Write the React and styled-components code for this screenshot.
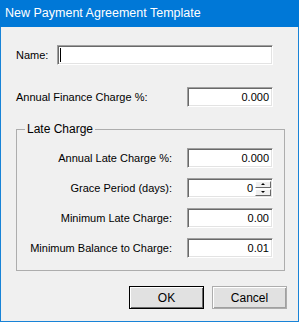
import React from 'react';
import styled, { createGlobalStyle } from 'styled-components';

const GlobalStyle = createGlobalStyle`
  html, body {
    margin: 0;
    padding: 0;
    background: #f0f0f0;
  }
  body {
    font-family: "Liberation Sans", Arial, sans-serif;
    font-size: 11px;
    color: #000;
  }
`;

const Window = styled.div`
  width: 299px;
  height: 322px;
  box-sizing: border-box;
  border: 1px solid #1883d7;
  border-top: none;
  background: #f0f0f0;
  display: flex;
  flex-direction: column;
`;

const TitleBar = styled.div`
  height: 27px;
  margin: 0 -1px;
  background: #0078d7;
  color: #fff;
  font-size: 12.5px;
  display: flex;
  align-items: center;
  padding-left: 5px;
  padding-bottom: 1px;
  box-sizing: border-box;
`;

const Content = styled.div`
  flex: 1;
  display: flex;
  flex-direction: column;
  padding: 18px 11px 0 15px;
`;

const Row = styled.div`
  display: flex;
  align-items: center;
  justify-content: ${(p) => (p.$right ? 'flex-end' : 'space-between')};
  height: 20px;
  padding-right: ${(p) => (p.$inner ? 0 : 14)}px;
  margin-bottom: ${(p) => p.$mb || 0}px;
`;

const Label = styled.span`
  white-space: nowrap;
  margin-right: ${(p) => p.$mr || 0}px;
`;

const TextBox = styled.div`
  position: relative;
  width: ${(p) => p.$w}px;
  height: 20px;
  box-sizing: border-box;
  background: #fff;
  border-style: solid;
  border-width: 1px;
  border-color: #a0a0a0 #fff #fff #a0a0a0;
  box-shadow: inset 1px 1px 0 #696969, inset -1px -1px 0 #e3e3e3;
  display: flex;
  align-items: center;
  justify-content: flex-end;
  padding: 0 3px 0 2px;
`;

const Caret = styled.span`
  position: absolute;
  left: 2px;
  top: 2px;
  width: 1px;
  height: 14px;
  background: #000;
`;

const Spinner = styled.div`
  display: flex;
  flex-direction: column;
  gap: 1px;
  margin-left: 2px;
  margin-right: -2px;
`;

const SpinButton = styled.div`
  width: 16px;
  height: 7px;
  box-sizing: border-box;
  background: #f0f0f0;
  border-style: solid;
  border-width: 1px;
  border-color: #fff #696969 #696969 #fff;
  display: flex;
  align-items: center;
  justify-content: center;
`;

const Arrow = styled.span`
  width: 0;
  height: 0;
  border-left: 2px solid transparent;
  border-right: 2px solid transparent;
  ${(p) => (p.$down ? 'border-top: 2px solid #000;' : 'border-bottom: 2px solid #000;')}
`;

const GroupBox = styled.div`
  position: relative;
  margin: 22px 2px 0 0;
  border: 1px solid #adadad;
  padding: 18px 11px 12px 0;
  display: flex;
  flex-direction: column;
  gap: 10px;
`;

const Legend = styled.span`
  position: absolute;
  top: -8px;
  left: 8px;
  padding: 0 2px;
  background: #f0f0f0;
  font-size: 12px;
`;

const ButtonRow = styled.div`
  display: flex;
  justify-content: flex-end;
  gap: 8px;
  margin-top: 15px;
`;

const Button = styled.div`
  width: 75px;
  height: 23px;
  box-sizing: border-box;
  background: #e1e1e1;
  border: 1px solid ${(p) => (p.$default ? '#000' : '#adadad')};
  box-shadow: ${(p) => (p.$default ? 'inset 1px 1px 0 #fff, inset -1px -1px 0 #696969' : 'inset 1px 1px 0 #fff, inset -1px -1px 0 #a0a0a0')};
  display: flex;
  align-items: center;
  justify-content: center;
  font-size: 12px;
`;

const fields = [
  { label: 'Annual Late Charge %:', value: '0.000' },
  { label: 'Grace Period (days):', value: '0', spin: true },
  { label: 'Minimum Late Charge:', value: '0.00' },
  { label: 'Minimum Balance to Charge:', value: '0.01' },
];

const App = () => {
  return (
    <>
      <GlobalStyle />
      <Window>
        <TitleBar>New Payment Agreement Template</TitleBar>
        <Content>
          <Row $mb={22}>
            <Label>Name:</Label>
            <TextBox $w={216}>
              <Caret />
            </TextBox>
          </Row>
          <Row>
            <Label>Annual Finance Charge %:</Label>
            <TextBox $w={86}>0.000</TextBox>
          </Row>
          <GroupBox>
            <Legend>Late Charge</Legend>
            {fields.map((f) => (
              <Row key={f.label} $right $inner>
                <Label $mr={15}>{f.label}</Label>
                <TextBox $w={86}>
                  {f.value}
                  {f.spin && (
                    <Spinner>
                      <SpinButton>
                        <Arrow />
                      </SpinButton>
                      <SpinButton>
                        <Arrow $down />
                      </SpinButton>
                    </Spinner>
                  )}
                </TextBox>
              </Row>
            ))}
          </GroupBox>
          <ButtonRow>
            <Button $default>OK</Button>
            <Button>Cancel</Button>
          </ButtonRow>
        </Content>
      </Window>
    </>
  );
};

export default App;
